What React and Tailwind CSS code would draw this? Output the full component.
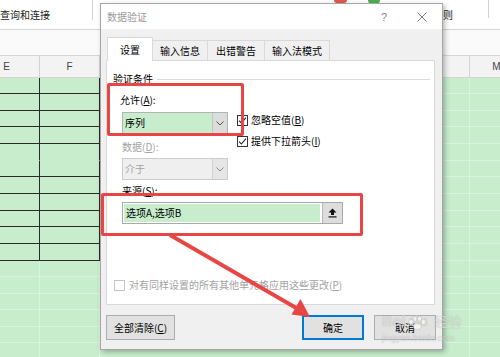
import React from "react";

const F = "font-['Noto_Sans_CJK_SC','Noto_Sans',sans-serif]";

const ROWS = [16, 17, 16, 17, 17, 16, 17, 17, 16, 17, 17, 16, 17, 16, 17, 16, 17];

function GridRow({ h, idx }) {
  const dark = idx < 11;
  const hideBottom = idx === 4;
  const hc = h === 16 ? "h-[16px]" : "h-[17px]";
  const leftCls = dark
    ? hideBottom
      ? "border-r border-r-[#2a2a2a] border-b border-b-transparent"
      : "border-r border-b border-[#2a2a2a]"
    : "border-r border-b border-[#ddf1e0]";
  return (
    <div className={`flex shrink-0 ${hc}`}>
      <div className={`w-[40px] shrink-0 ${leftCls}`} />
      <div className={`w-[60px] shrink-0 ${leftCls}`} />
      <div className="w-[370px] shrink-0 border-r border-b border-[#ddf1e0]" />
      <div className="w-[60px] shrink-0 border-r border-b border-[#ddf1e0]" />
    </div>
  );
}

function Check({ disabled }) {
  return (
    <div
      className={`w-[11px] h-[11px] shrink-0 border bg-white flex items-center justify-center ${
        disabled ? "border-[#c4c4c4]" : "border-[#333333]"
      }`}
    >
      {!disabled && (
        <svg width="9" height="9" viewBox="0 0 9 9">
          <path d="M1 4.6 L3.4 7 L8 1.6" fill="none" stroke="#222" strokeWidth="1.1" />
        </svg>
      )}
    </div>
  );
}

function Chevron({ color }) {
  return (
    <svg width="8" height="5" viewBox="0 0 8 5">
      <path d="M0.5 0.5 L4 4 L7.5 0.5" fill="none" stroke={color} strokeWidth="1" />
    </svg>
  );
}

export default function App() {
  return (
    <div className={`relative w-[500px] h-[357px] overflow-hidden bg-[#c7edcc] ${F} text-[10px] leading-[16px] text-black`}>
      {/* Ribbon */}
      <div className="flex h-[30px] bg-white border-b border-[#d6d6d6]">
        <div className="w-[92px] shrink-0 flex items-center text-[#222]">查询和连接</div>
        <div className="w-px h-[20px] bg-[#d2d2d2] shrink-0" />
        <div className="w-[241px] shrink-0" />
        <div className="w-[13px] h-[3px] rounded-b-full bg-[#e05a4a] shrink-0" />
        <div className="w-[21px] shrink-0" />
        <div className="w-[12px] h-[4px] rounded-b-full bg-[#4caf50] shrink-0" />
        <div className="w-[63px] shrink-0" />
        <div className="w-[10px] shrink-0 flex items-center text-[#222]">则</div>
        <div className="w-[35px] shrink-0" />
        <div className="w-px h-[18px] bg-[#d2d2d2] shrink-0" />
      </div>
      {/* formula area */}
      <div className="h-[26px] bg-[#fafafa] border-b border-[#d6d6d6]" />
      {/* column headers */}
      <div className="flex h-[22px] bg-[#f3f3f3] border-b border-[#d4d4d4] text-[#444] text-[10px] font-['Liberation_Sans',sans-serif]">
        <div className="w-[66px] -ml-[26px] shrink-0 border-r border-[#d4d4d4] flex items-center justify-center">E</div>
        <div className="w-[60px] shrink-0 border-r border-[#d4d4d4] flex items-center justify-center">F</div>
        <div className="w-[370px] shrink-0 border-r border-[#d4d4d4]" />
        <div className="w-[54px] shrink-0 border-r border-[#d4d4d4] flex items-center justify-center">M</div>
      </div>
      {/* grid */}
      <div className="flex flex-col">
        {ROWS.map((h, i) => (
          <GridRow key={i} h={h} idx={i} />
        ))}
      </div>

      {/* Dialog */}
      <div className="absolute left-[100px] top-[3px] w-[343px] h-[347px] border border-[#a6a6a6] bg-[#f0f0f0] shadow-[2px_2px_5px_rgba(0,0,0,0.28)] flex flex-col">
        <div className="h-[25px] shrink-0 bg-white flex items-center pl-[6px] text-[#9a9a9a]">
          <span>数据验证</span>
          <span className="ml-auto mr-[30px] text-[11px] text-[#8a8a8a] font-['Liberation_Sans',sans-serif]">?</span>
          <svg width="10" height="10" viewBox="0 0 10 10" className="mr-[15px]">
            <path d="M0.5 0.5 L9.5 9.5 M9.5 0.5 L0.5 9.5" stroke="#7a7a7a" strokeWidth="1" />
          </svg>
        </div>
        <div className="flex-1 px-[5px] pt-[8px] flex flex-col">
          {/* tabs */}
          <div className="flex items-end h-[24px] -mb-px relative z-10 pl-px">
            <div className="w-[46px] h-[24px] bg-white border-x border-t border-[#d9d9d9] flex items-center justify-center">设置</div>
            <div className="w-[55px] h-[21px] border-t border-r border-b border-[#d9d9d9] flex items-center justify-center">输入信息</div>
            <div className="w-[57px] h-[21px] border-t border-r border-b border-[#d9d9d9] flex items-center justify-center">出错警告</div>
            <div className="w-[65px] h-[21px] border-t border-r border-b border-[#d9d9d9] flex items-center justify-center">输入法模式</div>
          </div>
          {/* panel */}
          <div className="w-[329px] h-[245px] bg-white border border-[#d9d9d9] flex flex-col">
            <div className="mt-[10px] h-[16px] flex items-center pl-[6px] pr-[4px]">
              <span>验证条件</span>
              <div className="flex-1 h-px bg-[#dcdcdc] ml-[4px]" />
            </div>
            <div className="flex mt-[5px] pl-[15px]">
              <div className="w-[106px] flex flex-col">
                <div className="h-[16px] -ml-[2px]">
                  允许(<span className="underline">A</span>):
                </div>
                <div className="mt-[4px] h-[22px] border border-[#b3b3b3] bg-[#c7edcc] flex">
                  <div className="flex-1 pl-[2px] flex items-center">序列</div>
                  <div className="w-[15px] bg-[#dcdcdc] border-l border-[#c4c4c4] flex items-center justify-center">
                    <Chevron color="#555" />
                  </div>
                </div>
                <div className="mt-[5px] h-[16px] text-[#a2a2a2]">
                  数据(<span className="underline">D</span>):
                </div>
                <div className="mt-[3px] h-[22px] border border-[#cccccc] bg-[#efefef] flex text-[#a2a2a2]">
                  <div className="flex-1 pl-[2px] flex items-center">介于</div>
                  <div className="w-[15px] bg-[#e6e6e6] border-l border-[#d4d4d4] flex items-center justify-center">
                    <Chevron color="#8a8a8a" />
                  </div>
                </div>
              </div>
              <div className="ml-[9px] flex flex-col">
                <div className="mt-[20px] h-[16px] flex items-center gap-[3px]">
                  <Check />
                  <span>
                    忽略空值(<span className="underline">B</span>)
                  </span>
                </div>
                <div className="mt-[5px] h-[16px] flex items-center gap-[3px]">
                  <Check />
                  <span>
                    提供下拉箭头(<span className="underline">I</span>)
                  </span>
                </div>
              </div>
            </div>
            <div className="mt-[3px] h-[16px] pl-[15px]">
              来源(<span className="underline">S</span>):
            </div>
            <div className="mt-[3px] ml-[15px] w-[221px] h-[22px] border border-[#a9a9a9] bg-white flex">
              <div className="flex-1 m-px mr-[2px] bg-[#c7edcc] pl-[2px] flex items-center">选项A,选项B</div>
              <div className="w-[20px] bg-[#dddddd] border-l border-[#b5b5b5] flex items-center justify-center">
                <svg width="9" height="10" viewBox="0 0 9 10">
                  <path d="M4.5 0.5 L8.5 4.5 L6 4.5 L6 7 L3 7 L3 4.5 L0.5 4.5 Z" fill="#111" />
                  <rect x="0.5" y="8.3" width="8" height="1.2" fill="#111" />
                </svg>
              </div>
            </div>
            <div className="mt-[53px] h-[16px] pl-[7px] flex items-center gap-[4px] text-[#a2a2a2]">
              <Check disabled />
              <span>
                对有同样设置的所有其他单元格应用这些更改(<span className="underline">P</span>)
              </span>
            </div>
          </div>
          {/* buttons */}
          <div className="mt-[10px] flex h-[25px]">
            <div className="w-[69px] h-[25px] bg-[#e1e1e1] border border-[#adadad] flex items-center justify-center">
              <span>
                全部清除(<span className="underline">C</span>)
              </span>
            </div>
            <div className="ml-auto mr-px flex gap-[10px]">
              <div className="w-[62px] h-[25px] bg-[#e1e1e1] border-2 border-[#0078d7] flex items-center justify-center">确定</div>
              <div className="w-[62px] h-[25px] bg-[#e1e1e1] border border-[#adadad] flex items-center justify-center">取消</div>
            </div>
          </div>
        </div>
      </div>

      {/* Red annotation boxes */}
      <div className="absolute left-[107px] top-[83px] w-[137px] h-[53px] border-[3px] border-[#e84545] rounded-[2px]" />
      <div className="absolute left-[101px] top-[193px] w-[262px] h-[43px] border-[3px] border-[#e84545] rounded-[2px]" />

      {/* Arrow */}
      <svg className="absolute left-0 top-0 pointer-events-none" width="500" height="357" viewBox="0 0 500 357">
        <line x1="170" y1="235" x2="298" y2="309" stroke="#e84545" strokeWidth="3.8" />
        <polygon points="310,317 291.5,314.5 300.5,299" fill="#e84545" />
      </svg>

      {/* Watermark */}
      <div className="absolute left-[382px] top-[300px] flex flex-col text-white/60 [text-shadow:0_0_1px_rgba(0,0,0,0.3)] pointer-events-none">
        <div className="flex items-end h-[30px]">
          <span className="font-['Liberation_Sans',sans-serif] font-bold text-[15px] leading-[18px]">Bai</span>
          <div className="flex flex-col items-center ml-[2px]">
            <svg width="20" height="14" viewBox="0 0 20 14" className="opacity-70">
              <ellipse cx="4" cy="6" rx="2.2" ry="2.8" fill="white" stroke="#aaa" strokeWidth="0.5" />
              <ellipse cx="8" cy="2.8" rx="2" ry="2.6" fill="white" stroke="#aaa" strokeWidth="0.5" />
              <ellipse cx="12.5" cy="2.8" rx="2" ry="2.6" fill="white" stroke="#aaa" strokeWidth="0.5" />
              <ellipse cx="16.5" cy="6" rx="2.2" ry="2.8" fill="white" stroke="#aaa" strokeWidth="0.5" />
              <ellipse cx="10.2" cy="10.5" rx="4" ry="3" fill="white" stroke="#aaa" strokeWidth="0.5" />
            </svg>
          </div>
          <span className="font-['Liberation_Sans',sans-serif] font-bold text-[15px] leading-[18px] -ml-[18px] mr-[6px]">du</span>
          <span className="text-[14px] leading-[18px]">经验</span>
        </div>
        <div className="font-['Liberation_Sans',sans-serif] text-[9px] leading-[12px] mt-[2px]">jingyan.baidu.com</div>
      </div>
    </div>
  );
}
